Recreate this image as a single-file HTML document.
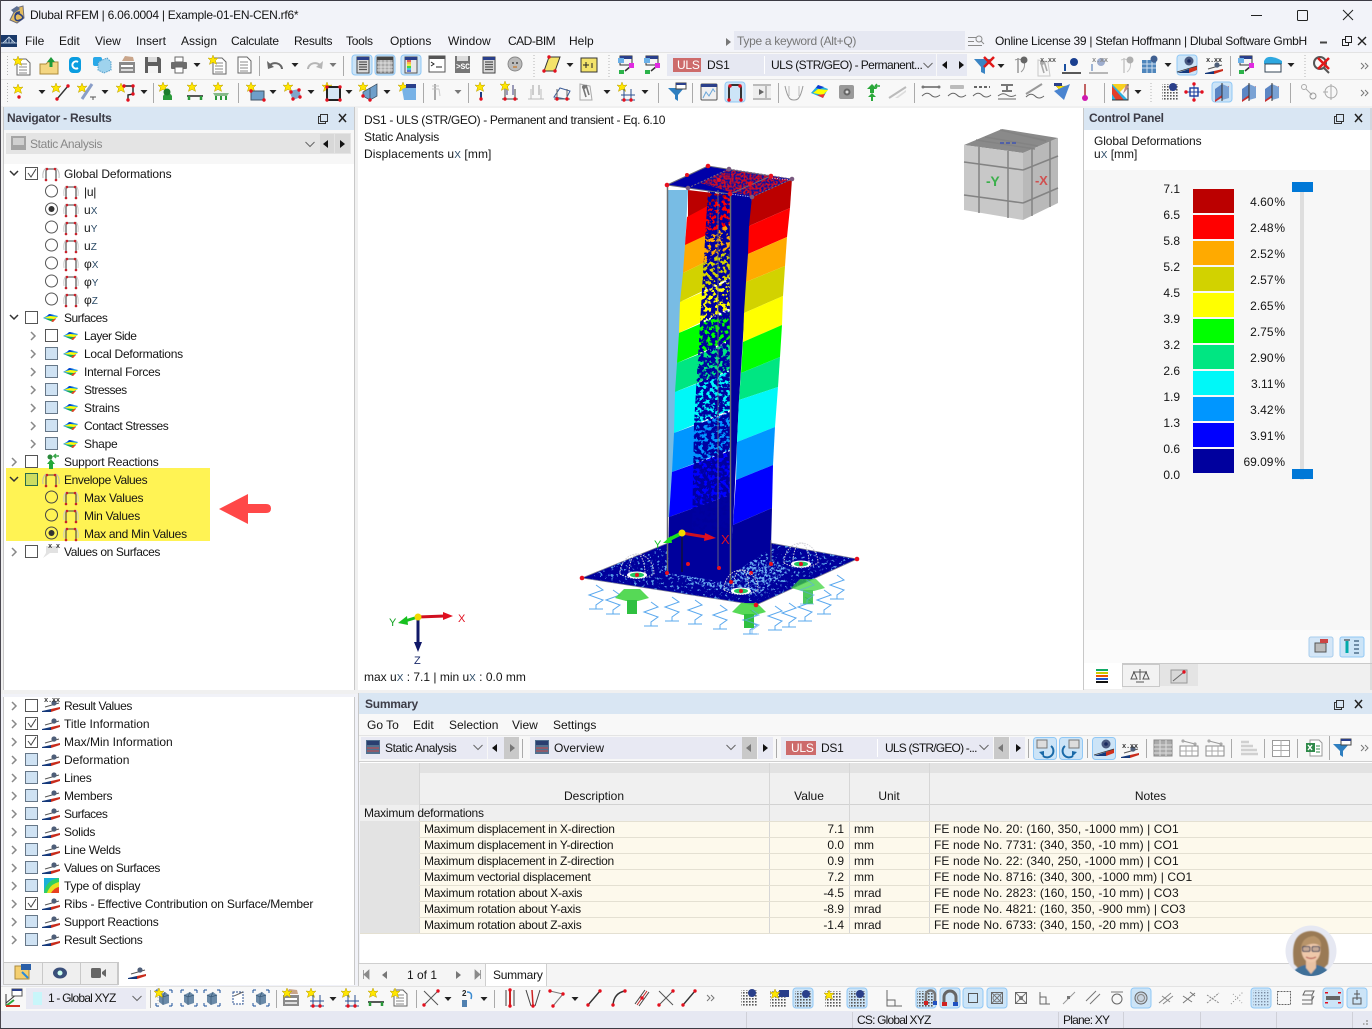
<!DOCTYPE html>
<html lang="en"><head><meta charset="utf-8"><title>Dlubal RFEM</title>
<style>
html,body{margin:0;padding:0}
body{width:1372px;height:1029px;overflow:hidden;position:relative;background:#f1f2f8;font:12px "Liberation Sans",sans-serif;color:#111}
.b{position:absolute}
.t{position:absolute;white-space:nowrap;line-height:14px;font:12px/14px "Liberation Sans",sans-serif;color:#141414;letter-spacing:-.25px}
.s{font-size:10px;color:#2b4a66}
.r{text-align:right}
.c{text-align:center}
svg{position:absolute;left:0;top:0}
.g{color:#888}
.d{font:bold 12px/14px "Liberation Sans",sans-serif;color:#3c3c46}
.n{letter-spacing:0}
.w{letter-spacing:.1px}
.p{letter-spacing:0;word-spacing:-2.5px}
.v{letter-spacing:-.8px}
</style></head><body>
<!-- backgrounds -->
<div class="b" style="left:0;top:0;width:1372px;height:30px;background:#f2f3f9"></div>
<div class="b" style="left:0;top:30px;width:1372px;height:22px;background:#f3f4f9"></div>
<div class="b" style="left:0;top:52px;width:1372px;height:54px;background:#f8f8f8;border-top:1px solid #e3e3e3;box-sizing:border-box"></div>
<div class="b" style="left:0;top:79px;width:1372px;height:1px;background:#e3e3e3"></div>
<div class="b" style="left:734px;top:31px;width:231px;height:19px;background:#e6e8f2"></div>
<div class="b" style="left:0;top:106px;width:1372px;height:588px;background:#f0f0f0"></div>
<div class="b" style="left:3px;top:107px;width:351px;height:23px;background:#d9e6f3"></div>
<div class="b" style="left:3px;top:130px;width:351px;height:34px;background:#f7f7f7"></div>
<div class="b" style="left:6px;top:133px;width:345px;height:21px;background:#e4e4e4"></div>
<div class="b" style="left:3px;top:164px;width:351px;height:526px;background:#fff"></div>
<div class="b" style="left:3px;top:697px;width:351px;height:288px;background:#fff"></div>
<div class="b" style="left:358px;top:108px;width:725px;height:582px;background:#fff"></div>
<div class="b" style="left:1084px;top:108px;width:288px;height:22px;background:#d9e6f3"></div>
<div class="b" style="left:1084px;top:130px;width:288px;height:40px;background:#fff"></div>
<div class="b" style="left:1084px;top:170px;width:288px;height:460px;background:#f7f7f7"></div>
<div class="b" style="left:1084px;top:630px;width:288px;height:33px;background:#fbfbfb"></div>
<div class="b" style="left:1084px;top:663px;width:288px;height:26px;background:#f0f0f0;border-top:1px solid #c9c9c9;box-sizing:border-box"></div>
<div class="b" style="left:1084px;top:663px;width:38px;height:26px;background:#fff"></div>
<div class="b" style="left:1160px;top:664px;width:38px;height:22px;background:#e4e4e4"></div>
<div class="b" style="left:1122px;top:664px;width:38px;height:23px;background:#f2f2f2;border:1px solid #c9c9c9;box-sizing:border-box"></div>
<!-- summary -->
<div class="b" style="left:358px;top:693px;width:1014px;height:21px;background:#d9e6f3"></div>
<div class="b" style="left:358px;top:714px;width:1014px;height:21px;background:#f8f8f8"></div>
<div class="b" style="left:358px;top:735px;width:1014px;height:27px;background:#f7f7f7;border-top:1px solid #e4e4e4;border-bottom:1px solid #cfcfcf;box-sizing:border-box"></div>
<div class="b" style="left:361px;top:737px;width:126px;height:22px;background:#e8e9f3"></div>
<div class="b" style="left:488px;top:737px;width:31px;height:22px;background:#e8e9f3"></div>
<div class="b" style="left:504px;top:737px;width:15px;height:22px;background:#c9c9c9"></div>
<div class="b" style="left:530px;top:737px;width:212px;height:22px;background:#e8e9f3"></div>
<div class="b" style="left:742px;top:737px;width:15px;height:22px;background:#c9c9c9"></div>
<div class="b" style="left:758px;top:737px;width:15px;height:22px;background:#e8e9f3"></div>
<div class="b" style="left:781px;top:737px;width:212px;height:22px;background:#e8e9f3"></div>
<div class="b" style="left:877px;top:739px;width:1px;height:18px;background:#fff"></div>
<div class="b" style="left:994px;top:737px;width:15px;height:22px;background:#c9c9c9"></div>
<div class="b" style="left:1010px;top:737px;width:15px;height:22px;background:#e8e9f3"></div>
<div class="b" style="left:786px;top:741px;width:30px;height:14px;background:#cd6b6b"></div>
<div class="b" style="left:360px;top:762px;width:1012px;height:201px;background:#fff"></div>
<div class="b" style="left:360px;top:763px;width:1012px;height:10px;background:#e2e2e2"></div>
<div class="b" style="left:360px;top:773px;width:1012px;height:32px;background:#f0f0f0;border-bottom:1px solid #d2d2d2;box-sizing:border-box"></div>
<div class="b" style="left:360px;top:763px;width:59px;height:42px;background:#e6e6e6"></div>
<div class="b" style="left:360px;top:805px;width:1012px;height:16px;background:#efefef"></div>
<div class="b" style="left:360px;top:821px;width:59px;height:112px;background:#e3e3e3"></div>
<div class="b" style="left:419px;top:821px;width:953px;height:112px;background:#fdf9ec"></div>
<div class="b" style="left:358px;top:963px;width:1014px;height:23px;background:#f5f5f5;border-top:1px solid #cfcfcf;box-sizing:border-box"></div>
<div class="b" style="left:485px;top:963px;width:62px;height:23px;background:#fff;border:1px solid #cfcfcf;border-bottom:0;box-sizing:border-box"></div>
<div class="b" style="left:0;top:986px;width:1372px;height:25px;background:#f8f8f8;border-top:1px solid #e3e3e3;box-sizing:border-box"></div>
<div class="b" style="left:26px;top:988px;width:120px;height:21px;background:#e8e9f3"></div>
<div class="b" style="left:0;top:1011px;width:1372px;height:18px;background:#e6e8f2"></div>
<div class="b" style="left:6px;top:468px;width:204px;height:73px;background:#fff354"></div>
<div class="b" style="left:3px;top:962px;width:115px;height:23px;background:#efefef;border:1px solid #c9c9c9;box-sizing:border-box"></div>
<div class="b" style="left:118px;top:960px;width:38px;height:26px;background:#fff"></div>
<!-- top combo -->
<div class="b" style="left:667px;top:54px;width:269px;height:22px;background:#e6e8f2"></div>
<div class="b" style="left:937px;top:54px;width:30px;height:22px;background:#e6e8f2"></div>
<div class="b" style="left:673px;top:58px;width:28px;height:14px;background:#cd6b6b"></div>
<div class="b" style="left:764px;top:56px;width:1px;height:18px;background:#fff"></div>

<svg width="1372" height="1029" viewBox="0 0 1372 1029" xmlns="http://www.w3.org/2000/svg" fill="none">
<defs>
<filter id="nz" x="0" y="0" width="1" height="1" color-interpolation-filters="sRGB"><feTurbulence type="fractalNoise" baseFrequency=".26" numOctaves="3" seed="7"/><feColorMatrix values="0 0 0 0 0 0 0 0 0 0 0 0 0 0 .63 14 0 0 0 -5.9"/><feComposite operator="in" in2="SourceAlpha"/></filter>
<filter id="nb" x="0" y="0" width="1" height="1" color-interpolation-filters="sRGB"><feTurbulence type="fractalNoise" baseFrequency=".35" numOctaves="3" seed="11"/><feColorMatrix values="0 0 0 0 .35 0 0 0 0 .62 0 0 0 0 .9 10 0 0 0 -6.2"/><feComposite operator="in" in2="SourceAlpha"/></filter>
<filter id="nc" x="0" y="0" width="1" height="1" color-interpolation-filters="sRGB"><feTurbulence type="fractalNoise" baseFrequency=".4" numOctaves="3" seed="5"/><feColorMatrix values="0 0 0 0 .42 0 0 0 0 .68 0 0 0 0 .95 10 0 0 0 -5.1"/><feComposite operator="in" in2="SourceAlpha"/></filter>
<filter id="nr" x="0" y="0" width="1" height="1" color-interpolation-filters="sRGB"><feTurbulence type="fractalNoise" baseFrequency=".5" numOctaves="1" seed="4"/><feColorMatrix values="0 0 0 0 .8 0 0 0 0 .05 0 0 0 0 .15 9 0 0 0 -3.9"/><feComposite operator="in" in2="SourceAlpha"/></filter>
<filter id="bl"><feGaussianBlur stdDeviation=".5"/></filter>
<clipPath id="av"><ellipse cx="1311" cy="951" rx="25" ry="25"/></clipPath>
<g id="st"><path d="M0-5 1.3-1.6 5-2 2.4.6 3.6 4.4 0 2.4-3.6 4.4-2.4.6-5-2-1.3-1.6Z" fill="#ffe600" stroke="#b89c00" stroke-width=".5"/></g>
<circle id="rd" r="1.7" fill="#e3101e"/>
<circle id="rs" r="1.3" fill="#c8202a"/>
<path id="dr" d="M-3.5-2H3.5L0 2Z" fill="#222"/>
<path id="dg" d="M-3.5-2H3.5L0 2Z" fill="#777"/>
<path id="chd" d="M-4-2 0 2 4-2" stroke="#333" stroke-width="1.5"/>
<path id="chr" d="M-2-4 2 0-2 4" stroke="#888" stroke-width="1.5"/>
<path id="chc" d="M-4.5-2 0 2.5 4.5-2" stroke="#666"/>
<path id="le" d="M2-4V4L-3 0Z" fill="#111"/>
<path id="ri" d="M-2-4V4L3 0Z" fill="#111"/>
<path id="leg" d="M2-4V4L-3 0Z" fill="#777"/>
<path id="rig" d="M-2-4V4L3 0Z" fill="#777"/>
<g id="ar"><path d="M-8 4Q-9-3-5-6M8 4Q9-3 5-6" stroke="#bbb"/><path d="M-5 6V-3Q-5-5-3-5H3Q5-5 5-3V6" stroke="#444" stroke-width="1.1"/><use href="#rs" x="-5" y="6"/><use href="#rs" x="5" y="6"/><use href="#rs" x="-4" y="-5"/><use href="#rs" x="4" y="-5"/></g>
<g id="aS"><path d="M-7 4Q-8-3-5-6M7 4Q8-3 5-6" stroke="#ccc"/><path d="M-5 6V-3Q-5-5-3-5H3Q5-5 5-3V6" stroke="#444" stroke-width="1.1"/><use href="#rs" x="-5" y="6"/><use href="#rs" x="5" y="6"/><use href="#rs" x="-4" y="-5"/><use href="#rs" x="4" y="-5"/></g>
<g id="sf"><path d="M-8 0-1-4 7-2 2 4Z" fill="#1a9ae6"/><path d="M-7 0-1-2 7-1 3 1Z" fill="#ff0"/><path d="M-5 1 4 1 2 4Z" fill="#10b050"/><path d="M-2-4 3-3 0-2-4-2Z" fill="#0044cc"/><path d="M0 3 3 1 5 1 2 4Z" fill="#f04020"/></g>
<g id="sr"><path d="M-2 1H2V7H-2Z" fill="#25a83a"/><path d="M0-3-4 2H4Z" fill="#25a83a"/><circle cx="-1" cy="-5" r="2.5" fill="#2a8a3a"/><path d="M8-6H3L5-8M3-6 5-4" stroke="#3aa84a" stroke-width="1.5"/></g>
<g id="vs"><path d="M-8 6-1 1H7V-6H-5V1" fill="#e2e2e2"/></g>
<g id="bw"><path d="M-9 5 0 3V6H-9Z" fill="#14387a"/><path d="M0 3 9 1V3L0 6Z" fill="#c82c1c"/><path d="M-6 1 8-3" stroke="#555"/><circle cx="3" cy="-3" r="2.6" fill="#4e5e78"/></g>
<g id="bwT"><path d="M-10 8 2 4V8H-10Z" fill="#14387a"/><path d="M2 4 10 1V5L2 8Z" fill="#d0301c"/><path d="M-10 7 10 1" stroke="#333" stroke-width=".7"/><circle cx="2" cy="-4" r="4.5" fill="#4a5a80"/><circle cx="2" cy="-4" r="1.8" fill="#1a2a60"/></g>
<g id="dc"><path d="M-6-8H3L7-4V8H-6Z" fill="#fff" stroke="#666"/><path d="M-4-3H4M-4 0H4M-4 3H4M-4 6H4" stroke="#888"/></g>
<g id="fo"><path d="M-9-2H-3L-1-4H9V8H-9Z" fill="#f4d682" stroke="#ab8a3a"/><path d="M2-9-2-4H.5V1H3.5V-4H6Z" fill="#1f9a3a"/></g>
<g id="cc"><rect x="-6" y="-8" width="12" height="16" rx="4" fill="#0a9de0"/><path d="M3-3A3.6 3.6 0 1 0 3 3" stroke="#fff" stroke-width="2"/></g>
<g id="cu"><rect x="-8" y="-8" width="9" height="9" rx="2" fill="#28a8e8"/><path d="M-1-4 6-7 10-3V5L3 8-3 5V-2Z" fill="#9fd3ee" stroke="#4c9ac8" stroke-dasharray="1.5 1"/></g>
<g id="pk"><rect x="-8" y="-3" width="16" height="11" fill="#8a8a8a"/><rect x="-6" y="0" width="12" height="2" fill="#fff"/><rect x="-6" y="4" width="12" height="2" fill="#ddd"/><path d="M-5-4-2-9 6-8 7-4Z" fill="#c9a58a"/></g>
<g id="sv"><path d="M-8-8H6L8-6V8H-8Z" fill="#5f5f5f"/><rect x="-5" y="-8" width="9" height="5" fill="#ddd"/><rect x="-5" y="1" width="10" height="7" fill="#f4f4f4"/></g>
<g id="pr"><rect x="-4" y="-8" width="8" height="5" fill="#fff" stroke="#666"/><rect x="-8" y="-3" width="16" height="7" rx="1" fill="#6d6d6d"/><rect x="-4" y="2" width="8" height="6" fill="#fff" stroke="#666"/></g>
<g id="un"><path d="M-7 0A7 6 0 0 1 6 3" stroke="#666" stroke-width="2"/><path d="M-9-5-8 3-2 1Z" fill="#666"/></g>
<g id="tw"><rect x="-6" y="-8" width="12" height="16" fill="#dadada" stroke="#444"/><rect x="-6" y="-8" width="12" height="3" fill="#2a3f8a"/><path d="M-4-3H4M-4-.5H4M-4 2H4M-4 4.5H4" stroke="#555" stroke-width="1.2"/></g>
<g id="tg"><rect x="-8" y="-8" width="16" height="16" fill="#aaa" stroke="#555"/><rect x="-8" y="-8" width="16" height="3" fill="#444"/><path d="M-8-2H8M-8 2H8M-8 5H8M-4-5V8M0-5V8M4-5V8" stroke="#eee" stroke-width=".7"/></g>
<g id="tc"><rect x="-6" y="-8" width="12" height="16" fill="#e8e8e8" stroke="#555"/><rect x="-6" y="-8" width="12" height="3" fill="#2a3f8a"/><path d="M-4-4H0" stroke="#d22" stroke-width="1.4"/><path d="M-4-2H0" stroke="#fa0" stroke-width="1.4"/><path d="M-4 0H0" stroke="#ee0" stroke-width="1.4"/><path d="M-4 2H0" stroke="#0c0" stroke-width="1.4"/><path d="M-4 4H0" stroke="#0bd" stroke-width="1.4"/><path d="M-4 6H0" stroke="#24c" stroke-width="1.4"/></g>
<g id="cm"><rect x="-8" y="-8" width="16" height="16" fill="#fff" stroke="#555"/><rect x="-8" y="-8" width="16" height="3" fill="#555"/><path d="M-6-2-3 0-6 2M-1 3H5" stroke="#222"/></g>
<g id="hd"><circle cy="-1" r="7" fill="#bbb" stroke="#888"/><circle cx="-2" cy="-2" r="1" fill="#444"/><circle cx="2" cy="-2" r="1" fill="#444"/><path d="M-2 2H2" stroke="#c60"/></g>
<g id="yl"><path d="M-3-8H8L3 6H-8Z" fill="#f4e36a" stroke="#333"/><use href="#rd" x="-8" y="6"/><use href="#rd" x="3" y="6"/><use href="#rd" x="-3" y="-8"/></g>
<g id="yb"><rect x="-8" y="-7" width="16" height="14" fill="#f4e36a" stroke="#333"/><path d="M-3-3V3M-6 0H0M3-2V3" stroke="#222"/></g>
<g id="cw"><rect x="-7" y="-9" width="12" height="9" fill="#f3f3f3" stroke="#333"/><rect x="-7" y="-9" width="12" height="3" fill="#2a3f8a"/><rect x="-9" y="-7" width="6" height="5" fill="#6ab0e8"/><rect x="-8" y="5" width="5" height="4" fill="#2bb34a"/><path d="M-2 6 4 1" stroke="#333" stroke-width="1.5"/><rect x="2" y="-2" width="5" height="5" fill="#e02ae0"/></g>
<g id="fl"><path d="M-9-7H8L2 1V8L-2 6V1Z" fill="#3b85c4"/></g>
<g id="tre"><path d="M-2-8V7" stroke="#666"/><path d="M-5-6Q0-8 4-5M4-5Q6 2 1 6" stroke="#999"/><circle cx="4" cy="-6" r="3.5" fill="#666"/></g>
<g id="grd"><rect x="-8" y="-6" width="14" height="13" fill="#4f86bc"/><path d="M-8-2H6M-8 2H6M-3-6V7M2-6V7" stroke="#cde"/><circle cx="4" cy="-7" r="3.5" fill="#3f5f90"/></g>
<g id="tr"><path d="M-7-2V5" stroke="#1a4fa0" stroke-width="2"/><path d="M-10 7H9" stroke="#222" stroke-width="1.4"/><circle cx="2" cy="-4" r="4" fill="#1a3f90"/></g>
<g id="l1"><use href="#st" x="-5" y="-4"/><path d="M-4 7 7-6" stroke="#333" stroke-width="1.4"/><use href="#rd" x="-4" y="7"/><use href="#rd" x="7" y="-6"/></g>
<g id="l2"><use href="#st" x="-5" y="-4"/><path d="M-5 7 5-8" stroke="#8a9ec8" stroke-width="3"/><path d="M3 5H9M6 5V8" stroke="#555"/></g>
<g id="l3"><use href="#st" x="-5" y="-4"/><path d="M-2-6H7V2L2 3V8" stroke="#222" stroke-width="1.4"/><use href="#rd" x="-2" y="-6"/><use href="#rd" x="7" y="-6"/><use href="#rd" x="7" y="2"/><use href="#rd" x="2" y="8"/></g>
<g id="p1"><use href="#st" x="-4" y="-5"/><path d="M-4 4A5 5 0 0 1 5 4V8H-4Z" fill="#2a9a3a"/><circle cy="0" r="3.5" fill="#1c7c2c"/></g>
<g id="p2"><use href="#st" x="-3" y="-5"/><path d="M-8 4H8" stroke="#222" stroke-width="1.5"/><path d="M-6 4V8M6 4V8" stroke="#2a9a3a" stroke-width="2.5"/></g>
<g id="p3"><use href="#st" x="-3" y="-5"/><path d="M-8 1H8L6 4H-6Z" fill="#86b98a"/><path d="M-5 4V8M0 4V8M5 4V8" stroke="#2a9a3a" stroke-width="2"/></g>
<g id="s1"><use href="#st" x="-5" y="-5"/><path d="M-5-1H8V8H-5Z" fill="#6f9fca" stroke="#456"/><use href="#rd" x="-5" y="-1"/><use href="#rd" x="8" y="8"/></g>
<g id="s2"><use href="#st" x="-5" y="-5"/><path d="M-4-1 6-3 8 5 0 8Z" fill="#7fa7cc"/><use href="#rd" x="-2" y="0"/><use href="#rd" x="6" y="-2"/><use href="#rd" x="0" y="7"/><use href="#rd" x="7" y="5"/></g>
<g id="s3"><use href="#st" x="-5" y="-5"/><rect x="-5" y="-5" width="13" height="13" fill="#d5e6f5" stroke="#222" stroke-width="2"/><use href="#rd" x="-5" y="-5"/><use href="#rd" x="8" y="-5"/><use href="#rd" x="-5" y="8"/><use href="#rd" x="8" y="8"/></g>
<g id="s4"><use href="#st" x="-6" y="-5"/><path d="M-6 0 1-4V8L-6 4ZM1-4 8-8V4L1 8Z" fill="#6f9fca" stroke="#345" stroke-width=".7"/><use href="#rd" x="-6" y="4"/><use href="#rd" x="1" y="8"/></g>
<g id="s5"><use href="#st" x="-5" y="-5"/><path d="M-6-3 6-7 8-5V8L-4 8Z" fill="#78b2e6"/><rect x="-2" y="-8" width="10" height="4" fill="#2a3f8a"/></g>
<g id="v1"><path d="M-1-8V8" stroke="#aaa" stroke-width="2"/><path d="M-4-6H3M-4-3H3" stroke="#c4c4c4"/><path d="M3-3 4 4" stroke="#ccc"/></g>
<g id="n1"><use href="#st" x="-1" y="-5"/><path d="M0 0V6" stroke="#1c3a80" stroke-width="2"/><use href="#rd" x="0" y="7"/></g>
<g id="n2"><path d="M-8 7H8M-5-3V7M5-3V7" stroke="#444"/><path d="M-3-7V3M3-7V3" stroke="#9a9ab8" stroke-width="2"/><use href="#rd" x="-5" y="7"/><use href="#rd" x="5" y="7"/><use href="#st" x="-5" y="-6"/></g>
<g id="n3"><path d="M-8 7H8M-5-3V7M5-3V7" stroke="#bbb"/><path d="M-3-7V3M3-7V3" stroke="#ccc" stroke-width="2"/></g>
<g id="n4"><path d="M-8 5-2-4 8-1 4 7Z" stroke="#3c5c98"/><path d="M-8 7H8M-5-3V7M5-3V7" stroke="#666"/><use href="#rd" x="-5" y="7"/><use href="#rd" x="5" y="7"/></g>
<g id="n5"><path d="M-8-8 2-6 4 8H-8Z" stroke="#aaa"/><path d="M-5-5-2 5M-2-7 1 3" stroke="#777" stroke-width="1.6"/><circle cx="-4" cy="-5" r="2" fill="#777"/></g>
<g id="n6"><use href="#st" x="-5" y="-5"/><path d="M-6 8H8M-3-3V8M4-3V8M-6 3H8" stroke="#2a4f90"/><use href="#rd" x="-3" y="8"/><use href="#rd" x="4" y="8"/></g>
<g id="fr"><rect x="-8" y="-8" width="16" height="16" rx="1" fill="#f0f0f0" stroke="#555"/><rect x="-8" y="-8" width="16" height="3" fill="#2a3f8a"/><path d="M-6 6-3 0 0 4 4-3 6 0" stroke="#6aa6d8"/></g>
<g id="arf"><rect x="-10" y="-10" width="20" height="20" rx="3" fill="#cce4f7" stroke="#90c8f6"/><path d="M-6 8V-4Q-6-7-3-7H3Q6-7 6-4V8" stroke="#333" stroke-width="2"/><use href="#rd" x="-6" y="8"/><use href="#rd" x="6" y="8"/><use href="#rd" x="-5" y="-6"/><use href="#rd" x="5" y="-6"/></g>
<g id="flm"><rect x="-9" y="-8" width="18" height="16" fill="#bbb"/><rect x="-9" y="-6" width="18" height="12" fill="#eee"/><path d="M-3-3 2 0-3 3Z" fill="#666"/><path d="M4-6V6" stroke="#888"/></g>
<g id="wv"><path d="M-9-6C-6 8-3 8 0 8S6 8 9-6" stroke="#999"/><path d="M-5-6V4M5-6V4" stroke="#bbb"/></g>
<g id="rb"><path d="M-9 1-2-7 8-3 3 6Z" fill="#20aee0"/><path d="M-7 1-2-3 8-2 3 3Z" fill="#ff0"/><path d="M-3 3 5 2 3 6Z" fill="#e33"/><path d="M-2-7 4-5 0-3-4-4Z" fill="#1238d0"/></g>
<g id="box"><rect x="-8" y="-7" width="15" height="14" rx="2" fill="#9a9a9a"/><circle cx="0" r="3.5" fill="#666"/><circle cx="0" r="1.5" fill="#ddd"/></g>
<g id="srg"><path d="M0-8-5-3H5Z" fill="#2aa83a"/><path d="M-2-3H2V1H-2Z" fill="#2aa83a"/><path d="M0 1-4 5H4Z" fill="#2aa83a"/><path d="M-1 5H1V9H-1Z" fill="#2aa83a"/><path d="M8-6H3M3-6 5-8M3-6 5-4" stroke="#2aa83a" stroke-width="1.4"/></g>
<g id="gb"><path d="M-9 6 8-5" stroke="#bbb" stroke-width="2"/><path d="M-3 6 8-2V0L0 6Z" fill="#ddd"/></g>
<g id="e1"><path d="M-8-5H8" stroke="#888" stroke-width="2"/><circle cx="-8" cy="-5" r="1.5" fill="#777"/><circle cx="8" cy="-5" r="1.5" fill="#777"/><path d="M-9 4Q-4-1 0 3T9 3" stroke="#666"/></g>
<g id="e2"><rect x="-7" y="-7" width="14" height="4" rx="1" fill="#bbb"/><path d="M-9 4Q-4-1 0 3T9 3" stroke="#666"/></g>
<g id="e3"><path d="M-8-5H8" stroke="#666" stroke-dasharray="3 2" stroke-width="2"/><path d="M-9 4Q-4-1 0 3T9 3" stroke="#666"/></g>
<g id="e4"><path d="M-6-7H6M0-7V-1M-5-1H5" stroke="#777" stroke-width="2"/><path d="M-9 4Q-4 0 0 3T9 3M-9 7H9" stroke="#666"/></g>
<g id="e5"><path d="M-9 2 7-8" stroke="#999" stroke-width="2"/><path d="M-9 5Q-4 0 0 4T9 4" stroke="#666"/></g>
<g id="e6"><use href="#st" x="-1" y="-4"/><path d="M-8-1 8-8 2 8Z" fill="#4a84d0"/><rect x="-8" y="-9" width="8" height="3" fill="#2a3f8a"/></g>
<g id="pn"><path d="M0-8V5" stroke="#b03030" stroke-width="1.5"/><circle cy="6" r="3" fill="#d018b0"/></g>
<g id="tm"><path d="M-8-8H8L-8 8Z" fill="#f8d020"/><path d="M-8 8-8-8 8 8Z" fill="#2ab0e0"/><path d="M-8-6 4 8H-4L-8 2Z" fill="#e43c28"/><path d="M-8 8H8V-8" stroke="#333"/><path d="M6-8 9-5 3 2Z" fill="#b88"/></g>
<g id="dg1"><rect x="-8" y="-8" width="16" height="16" fill="url(#dp)"/><circle cx="3" cy="-5" r="4" fill="#2a3f8a"/></g>
<pattern id="dp" width="3" height="3" patternUnits="userSpaceOnUse"><rect width="1.6" height="1.6" fill="#555"/></pattern>
<pattern id="dl" width="3" height="3" patternUnits="userSpaceOnUse"><rect width="1.4" height="1.4" fill="#7a8aa0"/></pattern>
<g id="dg0"><rect x="-8" y="-8" width="16" height="16" fill="url(#dp)"/></g>
<g id="dh"><rect x="-8" y="-8" width="16" height="16" fill="url(#dl)"/></g>
<g id="cr"><path d="M-8 0H8M0-8V8" stroke="#1a3fa0"/><rect x="-4" y="-4" width="8" height="8" stroke="#1a3fa0" stroke-width="1.4"/><use href="#rd" x="-8" y="0"/><use href="#rd" x="8" y="0"/><use href="#rd" x="0" y="-8"/><use href="#rd" x="0" y="8"/></g>
<g id="pl"><path d="M-7 5 7-6 7 1-7 10Z" fill="#c83030"/><path d="M-7-3 0-8V3L-7 8Z" fill="#5c86c4"/><path d="M0-8 7-5V6L0 8Z" fill="#7aa2d4"/><path d="M0-9V9" stroke="#333"/></g>
<g id="ln"><circle cx="-5" cy="-5" r="2.5" stroke="#aaa"/><path d="M-3-3 3 3" stroke="#aaa"/><circle cx="4" cy="4" r="3" stroke="#999"/></g>
<g id="rt"><circle r="6" stroke="#aaa"/><path d="M-8 0H-3M0-8V8" stroke="#aaa"/></g>
<g id="mv"><rect x="-8" y="-8" width="10" height="8" fill="#ddd" stroke="#777"/><path d="M6-2A6 6 0 0 1-2 8" stroke="#1a6aa8" stroke-width="2"/><path d="M-6 4-1 9V3Z" fill="#1a6aa8"/></g>
<g id="tb"><rect x="-9" y="-8" width="18" height="16" fill="#aaa" stroke="#888"/><path d="M-9-3H9M-9 1H9M-9 5H9M-3-8V8M3-8V8" stroke="#ddd"/></g>
<g id="tl"><rect x="-9" y="-2" width="18" height="10" fill="#fff" stroke="#888"/><path d="M-9 3H9M-3-2V8M3-2V8" stroke="#aaa"/><path d="M-6-7 6-4" stroke="#999"/><circle cx="-6" cy="-7" r="1.6" fill="#aaa"/><circle cx="6" cy="-4" r="1.6" fill="#aaa"/></g>
<g id="xg"><path d="M-4-8H5L8-5V8H-4Z" fill="#fff" stroke="#999"/><rect x="-8" y="-5" width="9" height="9" fill="#2f8a4a"/><path d="M-6-3-2 2M-2-3-6 2" stroke="#fff" stroke-width="1.4"/><path d="M2-2H6M2 1H6M2 4H6" stroke="#2f8a4a"/></g>
<g id="flw"><path d="M-9-4H7L1 3V9L-2 7V3Z" fill="#2f7fc0"/><rect x="-1" y="-9" width="10" height="6" fill="#fff" stroke="#444"/><rect x="-1" y="-9" width="10" height="2" fill="#2a3f8a"/></g>
<g id="ax"><path d="M-8 8V-4M-8 5 8-8" stroke="#333"/><path d="M-8 8 0 2" stroke="#2aa83a" stroke-width="2"/><path d="M-8 8H6" stroke="#d03020" stroke-width="2"/><rect x="-2" y="-9" width="10" height="7" fill="#fff" stroke="#555"/><rect x="-2" y="-9" width="10" height="2" fill="#2a3f8a"/></g>
<g id="sq"><rect x="-5" y="-6" width="10" height="12" fill="#fff" stroke="#2a4f90" stroke-dasharray="2 1"/><path d="M-4-2 5-6" stroke="#666"/></g>
<g id="cb"><rect x="-8" y="-8" width="16" height="16" stroke="#1a4f9a" stroke-dasharray="3 10 3 0"/><path d="M-5-3 1-6 5-3V5L-1 7-5 4Z" fill="#6a8aa8"/><path d="M1-6-1-1V7M-5-3-1-1 5-3" stroke="#3a5a78" stroke-width=".7"/></g>
<g id="cbs"><use href="#cb"/><use href="#st" x="-5" y="-5"/></g>
<g id="ml"><path d="M-4 8V-8M4 8V-8" stroke="#444"/><path d="M0-8V8" stroke="#c22" stroke-width="2"/><use href="#rd" x="0" y="-8"/><use href="#rd" x="0" y="8"/></g>
<g id="m2"><path d="M-7-8-2 8M7-8 2 8" stroke="#444"/><path d="M-1-8 0 7" stroke="#c22" stroke-width="1.5"/><use href="#rd" x="0" y="8"/></g>
<g id="m3"><path d="M-6-7 7-4-3 8" stroke="#777"/><use href="#rd" x="-6" y="-7"/><use href="#rd" x="7" y="-4"/><use href="#rd" x="-3" y="8"/></g>
<g id="m4"><path d="M-6 7 6-7" stroke="#333" stroke-width="1.4"/><use href="#rd" x="-6" y="7"/><use href="#rd" x="6" y="-7"/></g>
<g id="m5"><path d="M-6 7Q-5-5 6-7" stroke="#333" stroke-width="1.4"/><use href="#rd" x="-6" y="7"/><use href="#rd" x="6" y="-7"/></g>
<g id="m6"><path d="M-7 6 3-8M-3 8 7-6" stroke="#444"/><path d="M-5 7 5-7" stroke="#c22"/><use href="#rd" x="0" y="0"/></g>
<g id="m7"><path d="M-7 7 7-7M-7-7 7 7" stroke="#555"/><use href="#rd" x="7" y="-7"/><use href="#rd" x="-7" y="7"/></g>
<g id="hsq"><rect x="-10" y="-10" width="20" height="20" rx="3" fill="#cce4f7" stroke="#90c8f6"/></g>
<g id="spr"><path d="M7 0 14 5 0 10 14 15 7 20V24M0 24H14" stroke="#5aa8ee" stroke-width="1"/></g>
<g id="gar"><path d="M-17 0-8-9H8L17 0 6 3H-6Z" fill="#3fd43f" opacity=".88"/><rect x="-5" y="2" width="10" height="14" fill="#2fc040"/></g>
<g id="dome"><path d="M-17 0A17 20 0 0 1 17 0M-8 0A8 20 0 0 1 8 0M-17 0Q0 9 17 0" stroke="#d2d2d8" stroke-dasharray="1.5 1.2"/><ellipse cx="0" cy="1" rx="10" ry="3.500" fill="#fff"/><ellipse cx="0" cy="1" rx="7" ry="2.400" fill="#22c860"/><circle cy="1" r="2" fill="#e3101e"/></g>
</defs>

<!-- window edges -->
<path d="M0 .5H1372" stroke="#3c3a44"/>
<path d="M.5 0V1029" stroke="#4a4850"/>
<path d="M0 1028.5H1372" stroke="#3c3a44"/>
<path d="M3.5 107V690M3.5 697V985" stroke="#c8c8c8"/>
<path d="M354.5 107V690M354.5 697V985" stroke="#c8c8c8"/>
<path d="M1083.5 108V690M1371 108V690" stroke="#c8c8c8"/>
<path d="M358.5 693V986" stroke="#c8c8c8"/>

<!-- title bar icon -->
<path d="M10 20 16 8 23 6 24 18 17 23Z" fill="#e4bc5e" stroke="#6e6e7c"/>
<path d="M11 10 17 6 20 9 14 13Z" fill="#5d6e90"/>
<path d="M20 12Q15 12 15 17T20 20 21 15 16 15" stroke="#2a3f80" stroke-width="1.500"/>
<path d="M1251 15.500H1262" stroke="#222"/>
<rect x="1297.500" y="10.500" width="10" height="10" rx="1" stroke="#222"/>
<path d="M1343 10 1353 20M1353 10 1343 20" stroke="#222"/>
<!-- menu bar icon -->
<rect x="1" y="35" width="16" height="12" fill="#1a3a6a"/><path d="M1 43H17M3 43 9 37 15 43M9 37V43M6 43V40M12 43V40" stroke="#cfe0f0" stroke-width=".8"/>
<path d="M726 38V46L731 42Z" fill="#777"/>
<path d="M968 37.500H976M968 41.500H974M968 45.500H982" stroke="#8a8a8a"/><circle cx="979" cy="39" r="3" stroke="#8a8a8a"/><path d="M981 41 984 44" stroke="#8a8a8a"/>
<path d="M1320 42.500H1327" stroke="#444" stroke-width="2"/>
<rect x="1342.500" y="39.500" width="6" height="6" stroke="#222"/><rect x="1345.500" y="36.500" width="6" height="6" fill="#f3f4f9" stroke="#222"/>
<path d="M1358 37 1366 45M1366 37 1358 45" stroke="#222" stroke-width="1.4"/>

<!-- toolbar grips & separators -->
<path d="M7.500 56V76M7.500 83V103M534 55V77M609 55V77M1305 55V77M1151 83V103M158 988V1008" stroke="#b5b5b5" stroke-dasharray="1 2"/>
<path d="M259.500 56V76M343.500 56V76M1230.500 56V76M153.500 83V103M238.500 83V103M423.500 83V103M468.500 83V103M658.500 83V103M692.500 83V103M778.500 83V103M914.500 83V103M1104.500 83V103M1290.500 83V103M150.500 990V1008M276.500 990V1008M416.500 990V1008M494.500 990V1008M522.500 739V758M776.500 739V758M1028.500 739V758M1087.500 739V758M1146.500 739V758M1231.500 739V758M1264.500 739V758M1297.500 739V758M1329.500 736V760" stroke="#aaa"/>

<!-- toolbar 1 -->
<use href="#dc" x="23" y="67"/><use href="#st" x="18" y="61"/>
<use href="#fo" x="49" y="66"/><use href="#cc" x="75" y="65"/><use href="#cu" x="101" y="65"/>
<use href="#pk" x="127" y="65"/><use href="#sv" x="153" y="65"/><use href="#pr" x="179" y="65"/><use href="#dr" x="197" y="65"/>
<use href="#dc" x="219" y="66"/><use href="#st" x="213" y="60"/><use href="#dc" x="244" y="65"/>
<use href="#un" x="276" y="66"/><use href="#dr" x="295" y="65"/><use href="#un" transform="translate(314 66) scale(-1 1)" opacity=".45"/><use href="#dg" x="333" y="65"/>
<use href="#hsq" x="362" y="65"/><use href="#hsq" x="385" y="65"/><use href="#hsq" x="411" y="65"/>
<use href="#tw" x="363" y="65"/><use href="#tg" x="385" y="65"/><use href="#tc" x="411" y="65"/>
<use href="#cm" x="437" y="64"/>
<rect x="455" y="56" width="15" height="17" fill="#777"/><rect x="457" y="56" width="11" height="5" fill="#ddd"/>
<use href="#tw" x="489" y="65"/><use href="#hd" x="515" y="65"/>
<use href="#yl" x="552" y="65"/><use href="#dr" x="570" y="65"/><use href="#yb" x="589" y="65"/>
<use href="#cw" x="627" y="65"/><use href="#cw" x="653" y="65"/>
<use href="#le" x="945" y="65"/><use href="#ri" x="961" y="65"/><use href="#chc" x="928" y="65"/>
<use href="#fl" x="983" y="66"/><path d="M984 57 994 67M994 57 984 67" stroke="#e01818" stroke-width="2.500"/><use href="#dr" x="1001" y="66"/>
<use href="#tre" x="1020" y="66"/><use href="#n5" x="1046" y="68" opacity=".6"/><use href="#tr" x="1072" y="66"/><use href="#tr" x="1099" y="66" opacity=".4"/><use href="#tre" x="1126" y="66" opacity=".5"/>
<use href="#grd" x="1150" y="66"/><use href="#dr" x="1168" y="65"/>
<use href="#hsq" x="1187" y="65"/><use href="#bwT" x="1187" y="65"/><use href="#bw" x="1214" y="68"/>
<use href="#cw" x="1247" y="65"/>
<path d="M1264 61Q1266 56 1272 57T1282 61V64H1264Z" fill="#2ea8e0"/><rect x="1265" y="64" width="16" height="8" fill="#fff" stroke="#345"/><use href="#dr" x="1291" y="65"/>
<circle cx="1320" cy="63" r="6" stroke="#555" stroke-width="2"/><path d="M1324 68 1329 73" stroke="#555" stroke-width="2"/><path d="M1318 58 1329 69M1329 58 1318 69" stroke="#e01818" stroke-width="2.500"/>
<path d="M1361 63 1364 66 1361 69M1365 63 1368 66 1365 69" stroke="#777"/>

<!-- toolbar 2 -->
<use href="#st" x="18" y="89"/><use href="#rd" x="19" y="97"/><use href="#dr" x="42" y="92"/>
<use href="#l1" x="61" y="92"/><use href="#l2" x="87" y="92"/><use href="#dr" x="105" y="92"/><use href="#l3" x="126" y="92"/><use href="#dr" x="144" y="92"/>
<use href="#p1" x="167" y="92"/><use href="#p2" x="195" y="92"/><use href="#p3" x="221" y="92"/>
<use href="#s1" x="256" y="92"/><use href="#dr" x="273" y="92"/><use href="#s2" x="293" y="92"/><use href="#dr" x="311" y="92"/><use href="#s3" x="332" y="92"/><use href="#dr" x="349" y="92"/><use href="#s4" x="369" y="92"/><use href="#dr" x="387" y="92"/><use href="#s5" x="408" y="92"/>
<use href="#v1" x="436" y="92"/><use href="#dg" x="458" y="92"/>
<use href="#n1" x="481" y="92"/><use href="#n2" x="510" y="92"/><use href="#n3" x="536" y="92"/><use href="#n4" x="562" y="92"/><use href="#n5" x="588" y="92"/><use href="#dr" x="607" y="92"/><use href="#n6" x="627" y="92"/><use href="#dr" x="645" y="92"/>
<use href="#flw" x="677" y="92"/>
<use href="#fr" x="709" y="92"/><use href="#arf" x="735" y="92"/><use href="#flm" x="762" y="92"/>
<use href="#wv" x="794" y="92"/><use href="#rb" x="820" y="92"/><use href="#box" x="847" y="92"/><use href="#srg" x="872" y="92"/><use href="#gb" x="898" y="92"/>
<use href="#e1" x="931" y="92"/><use href="#e2" x="957" y="92"/><use href="#e3" x="982" y="92"/><use href="#e4" x="1007" y="92"/><use href="#e5" x="1035" y="92"/><use href="#e6" x="1062" y="92"/><use href="#pn" x="1085" y="92"/>
<use href="#tm" x="1120" y="92"/><use href="#dr" x="1138" y="92"/>
<use href="#dg1" x="1170" y="92"/><use href="#cr" x="1194" y="92"/><use href="#hsq" x="1222" y="92"/><use href="#pl" x="1222" y="92"/><use href="#pl" x="1249" y="92"/><use href="#pl" x="1272" y="92"/>
<use href="#ln" x="1309" y="92"/><use href="#rt" x="1331" y="92"/>
<path d="M1361 90 1364 93 1361 96M1365 90 1368 93 1365 96" stroke="#777"/>

<!-- panel header icons -->
<rect x="318.500" y="116.500" width="7" height="7" stroke="#333"/><rect x="320.500" y="114.500" width="7" height="7" fill="#d9e6f3" stroke="#333"/>
<path d="M339 114 346 122M346 114 339 122" stroke="#222" stroke-width="1.500"/>
<rect x="1334.500" y="116.500" width="7" height="7" stroke="#333"/><rect x="1336.500" y="114.500" width="7" height="7" fill="#d9e6f3" stroke="#333"/>
<path d="M1355 114 1362 122M1362 114 1355 122" stroke="#222" stroke-width="1.500"/>
<rect x="1334.500" y="702.500" width="7" height="7" stroke="#333"/><rect x="1336.500" y="700.500" width="7" height="7" fill="#d9e6f3" stroke="#333"/>
<path d="M1355 700 1362 708M1362 700 1355 708" stroke="#222" stroke-width="1.500"/>
<!-- nav combo -->
<rect x="11" y="136" width="15" height="14" fill="#a4a4a4"/><rect x="13" y="138" width="11" height="7" fill="#d0d0d0"/>
<use href="#chc" x="310" y="144"/><rect x="320" y="134" width="14" height="19" fill="#d8d8d8"/><rect x="335" y="134" width="15" height="19" fill="#d8d8d8"/><use href="#le" x="326" y="144"/><use href="#ri" x="342" y="144"/>

<!-- navigator tree -->
<g stroke-width="1">
<use href="#chd" x="14" y="173"/><rect x="25.500" y="167.500" width="12" height="12" fill="#fff" stroke="#555"/><path d="M28 173 31 177 36 169" stroke="#444"/><use href="#ar" x="51" y="174"/>
<circle cx="51.500" cy="191" r="6" fill="#fff" stroke="#555"/><use href="#aS" x="71" y="192"/>
<circle cx="51.500" cy="209" r="6" fill="#fff" stroke="#555"/><circle cx="51.500" cy="209" r="3" fill="#333"/><use href="#aS" x="71" y="210"/>
<circle cx="51.500" cy="227" r="6" fill="#fff" stroke="#555"/><use href="#aS" x="71" y="228"/>
<circle cx="51.500" cy="245" r="6" fill="#fff" stroke="#555"/><use href="#aS" x="71" y="246"/>
<circle cx="51.500" cy="263" r="6" fill="#fff" stroke="#555"/><use href="#aS" x="71" y="264"/>
<circle cx="51.500" cy="281" r="6" fill="#fff" stroke="#555"/><use href="#aS" x="71" y="282"/>
<circle cx="51.500" cy="299" r="6" fill="#fff" stroke="#555"/><use href="#aS" x="71" y="300"/>
<use href="#chd" x="14" y="317"/><rect x="25.500" y="311.500" width="12" height="12" fill="#fff" stroke="#555"/><use href="#sf" x="51" y="318"/>
<use href="#chr" x="33" y="336"/><rect x="45.500" y="329.500" width="12" height="12" fill="#fff" stroke="#555"/><use href="#sf" x="71" y="336"/>
<use href="#chr" x="33" y="354"/><rect x="45.500" y="347.500" width="12" height="12" fill="#cfe2f3" stroke="#667788"/><use href="#sf" x="71" y="354"/>
<use href="#chr" x="33" y="372"/><rect x="45.500" y="365.500" width="12" height="12" fill="#cfe2f3" stroke="#667788"/><use href="#sf" x="71" y="372"/>
<use href="#chr" x="33" y="390"/><rect x="45.500" y="383.500" width="12" height="12" fill="#cfe2f3" stroke="#667788"/><use href="#sf" x="71" y="390"/>
<use href="#chr" x="33" y="408"/><rect x="45.500" y="401.500" width="12" height="12" fill="#cfe2f3" stroke="#667788"/><use href="#sf" x="71" y="408"/>
<use href="#chr" x="33" y="426"/><rect x="45.500" y="419.500" width="12" height="12" fill="#cfe2f3" stroke="#667788"/><use href="#sf" x="71" y="426"/>
<use href="#chr" x="33" y="444"/><rect x="45.500" y="437.500" width="12" height="12" fill="#cfe2f3" stroke="#667788"/><use href="#sf" x="71" y="444"/>
<use href="#chr" x="14" y="462"/><rect x="25.500" y="455.500" width="12" height="12" fill="#fff" stroke="#555"/><use href="#sr" x="51" y="462"/>
<use href="#chd" x="14" y="479"/><rect x="25.500" y="473.500" width="12" height="12" fill="#cddc60" stroke="#2a6a4a"/><use href="#ar" x="51" y="480"/>
<circle cx="51.500" cy="497" r="6" fill="#fff354" stroke="#444"/><use href="#aS" x="71" y="498"/>
<circle cx="51.500" cy="515" r="6" fill="#fff354" stroke="#444"/><use href="#aS" x="71" y="516"/>
<circle cx="51.500" cy="533" r="6" fill="#fff354" stroke="#444"/><circle cx="51.500" cy="533" r="3" fill="#333"/><use href="#aS" x="71" y="534"/>
<use href="#chr" x="14" y="552"/><rect x="25.500" y="545.500" width="12" height="12" fill="#fff" stroke="#555"/><use href="#vs" x="51" y="552"/>
</g>
<path d="M219 509 248 494V504H266Q271 504 271 508.500T266 513H248V524Z" fill="#ff4848"/>

<!-- lower tree -->
<use href="#chr" x="14" y="706"/><rect x="25.500" y="699.500" width="12" height="12" fill="#fff" stroke="#555"/><use href="#bw" x="51" y="706"/>
<use href="#chr" x="14" y="724"/><rect x="25.500" y="717.500" width="12" height="12" fill="#fff" stroke="#555"/><path d="M28 723 31 727 36 719" stroke="#444"/><use href="#bw" x="51" y="724"/>
<use href="#chr" x="14" y="742"/><rect x="25.500" y="735.500" width="12" height="12" fill="#fff" stroke="#555"/><path d="M28 741 31 745 36 737" stroke="#444"/><use href="#bw" x="51" y="742"/>
<use href="#chr" x="14" y="760"/><rect x="25.500" y="753.500" width="12" height="12" fill="#cfe2f3" stroke="#667788"/><use href="#bw" x="51" y="760"/>
<use href="#chr" x="14" y="778"/><rect x="25.500" y="771.500" width="12" height="12" fill="#cfe2f3" stroke="#667788"/><use href="#bw" x="51" y="778"/>
<use href="#chr" x="14" y="796"/><rect x="25.500" y="789.500" width="12" height="12" fill="#cfe2f3" stroke="#667788"/><use href="#bw" x="51" y="796"/>
<use href="#chr" x="14" y="814"/><rect x="25.500" y="807.500" width="12" height="12" fill="#cfe2f3" stroke="#667788"/><use href="#bw" x="51" y="814"/>
<use href="#chr" x="14" y="832"/><rect x="25.500" y="825.500" width="12" height="12" fill="#cfe2f3" stroke="#667788"/><use href="#bw" x="51" y="832"/>
<use href="#chr" x="14" y="850"/><rect x="25.500" y="843.500" width="12" height="12" fill="#cfe2f3" stroke="#667788"/><use href="#bw" x="51" y="850"/>
<use href="#chr" x="14" y="868"/><rect x="25.500" y="861.500" width="12" height="12" fill="#cfe2f3" stroke="#667788"/><use href="#bw" x="51" y="868"/>
<use href="#chr" x="14" y="886"/><rect x="25.500" y="879.500" width="12" height="12" fill="#cfe2f3" stroke="#667788"/><rect x="44" y="878" width="15" height="15" fill="#1ab0d8"/><path d="M44 893Q46 880 59 878V893Z" fill="#30d060"/><path d="M47 893Q50 884 59 882V893Z" fill="#e8e020"/><path d="M51 893Q54 888 59 887V893Z" fill="#e84020"/>
<use href="#chr" x="14" y="904"/><rect x="25.500" y="897.500" width="12" height="12" fill="#fff" stroke="#555"/><path d="M28 903 31 907 36 899" stroke="#444"/><use href="#bw" x="51" y="904"/>
<use href="#chr" x="14" y="922"/><rect x="25.500" y="915.500" width="12" height="12" fill="#cfe2f3" stroke="#667788"/><use href="#bw" x="51" y="922"/>
<use href="#chr" x="14" y="940"/><rect x="25.500" y="933.500" width="12" height="12" fill="#cfe2f3" stroke="#667788"/><use href="#bw" x="51" y="940"/>

<!-- nav tabs -->
<path d="M42.500 962V985M80.500 962V985M118.500 962V985" stroke="#c9c9c9"/>
<path d="M15 966H29V979H15Z" fill="#f4cf70" stroke="#ab8a3a"/><rect x="21" y="964" width="10" height="6" fill="#2a5fa8"/><path d="M22 972 28 978" stroke="#2a8ad8" stroke-width="2"/>
<ellipse cx="60" cy="973" rx="7" ry="5.500" fill="#3a4f7a"/><circle cx="60" cy="973" r="2.500" fill="#cfe"/>
<rect x="91" y="968" width="10" height="10" rx="1.500" fill="#666"/><path d="M102 972 106 969V977L102 974Z" fill="#666"/>
<use href="#bw" x="137" y="973"/>

<!-- 3D MODEL -->
<!-- base plate -->
<path d="M582 578 700 530 857 559 756 605Z" fill="#00009c" stroke="#7a7a90" stroke-width=".8"/>
<path d="M582 578 700 530 857 559 756 605Z" fill="#000" filter="url(#nb)"/>
<path d="M655 568 690 560 770 560 790 570 756 596 700 585Z" fill="#000" filter="url(#nc)"/>
<!-- springs -->
<use href="#spr" x="589" y="585"/><use href="#spr" x="606" y="590"/><use href="#spr" x="644" y="602"/><use href="#spr" x="665" y="597"/><use href="#spr" x="688" y="600"/><use href="#spr" x="713" y="605"/><use href="#spr" x="743" y="610"/><use href="#spr" x="768" y="606"/><use href="#spr" x="782" y="603"/><use href="#spr" x="798" y="597"/><use href="#spr" x="817" y="590"/><use href="#spr" x="830" y="575"/>
<use href="#gar" x="632" y="598"/><use href="#gar" x="749" y="612"/><use href="#gar" x="808" y="588" opacity=".85"/>
<use href="#spr" x="745" y="610" opacity=".7"/><use href="#spr" x="800" y="580" opacity=".6"/>
<!-- column: left light-blue -->
<path d="M667 190H688L671 517H668Z" fill="#78bce4"/>
<!-- left bands -->
<path d="M688 190 730 195V230H688Z" fill="#bb0000"/>
<path d="M687 217 730 194V240L685 245Z" fill="#ff0000"/>
<path d="M685 245 730 224V250L683 273Z" fill="#ffaa00"/>
<path d="M683 273 730 250V278L680 302Z" fill="#d2d200"/>
<path d="M680 302 730 280V308L679 333Z" fill="#ffff00"/>
<path d="M679 333 730 311V340L677 363Z" fill="#00ff00"/>
<path d="M677 363 730 342V370L675 392Z" fill="#00e682"/>
<path d="M675 392 730 371V410L674 433Z" fill="#00f8f8"/>
<path d="M674 433 730 412V450L672 472Z" fill="#0096ff"/>
<path d="M672 472 730 451V495L669 517Z" fill="#0000ff"/>
<path d="M669 517 730 495V583L668 573Z" fill="#00009c"/>
<!-- noise -->
<path d="M708 190 730 194V528L692 535 694 424Z" fill="#000" filter="url(#nz)"/>
<!-- dark blue strip -->
<path d="M730 194 752 197 739 400 737 442 733 525 730 583Z" fill="#00009e"/>
<!-- right bands -->
<path d="M752 197 792 179 790 208 749 226Z" fill="#bb0000"/>
<path d="M749 226 790 208 787 237 748 254Z" fill="#ff0000"/>
<path d="M748 254 787 237 785 266 746 282Z" fill="#ffaa00"/>
<path d="M746 282 785 266 783 296 744 313Z" fill="#d2d200"/>
<path d="M744 313 783 296 782 325 743 342Z" fill="#ffff00"/>
<path d="M743 342 782 325 780 357 741 373Z" fill="#00ff00"/>
<path d="M741 373 780 357 778 387 739 400Z" fill="#00e682"/>
<path d="M739 400 778 387 775 427 737 442Z" fill="#00f8f8"/>
<path d="M737 442 775 427 773 465 736 480Z" fill="#0096ff"/>
<path d="M736 480 773 465 772 508 733 525Z" fill="#0000ff"/>
<path d="M733 525 772 508 771 547 732 575 730 583Z" fill="#00009c"/>
<!-- top face -->
<path d="M667 185 708 166 771 176 792 179 752 197 730 194Z" fill="#0000a8"/>
<path d="M700 183 729 169 792 179 752 197 730 192Z" fill="#1010a0"/>
<path d="M700 183 729 169 790 179 752 196 730 192Z" fill="#000" filter="url(#nr)"/>
<path d="M667 185 708 166 771 176 730 194Z" stroke="#6a6a7a" stroke-width="1"/>
<path d="M688 188 729 169 792 179 752 197" stroke="#7a6a80" stroke-dasharray="2 1.500"/>
<path d="M730 194 752 197M772 178 790 180" stroke="#fff" stroke-dasharray="1 1.500" opacity=".8"/>
<!-- column edges -->
<path d="M667.500 185V573M730.500 194V583" stroke="#6e6e6e" stroke-width="1.500"/>
<path d="M718 568V190M771 564V540" stroke="#777" stroke-width=".8"/>
<g fill="#e8101e"><circle cx="667" cy="185" r="2.300"/><circle cx="708" cy="166" r="2.300"/><circle cx="771" cy="176" r="2.300"/><circle cx="730" cy="194" r="2.300"/><circle cx="687" cy="175" r="2"/><circle cx="719" cy="180" r="2"/><circle cx="750" cy="184" r="2"/></g>
<g fill="#7a5a80"><circle cx="688" cy="188" r="2.300"/><circle cx="729" cy="169" r="2.300"/><circle cx="792" cy="179" r="2.300"/><circle cx="752" cy="197" r="2.300"/></g>
<g fill="#e8101e"><circle cx="582" cy="578" r="2.300"/><circle cx="857" cy="559" r="2.300"/><circle cx="756" cy="605" r="2.300"/><circle cx="667" cy="573" r="2"/><circle cx="688" cy="564" r="2"/><circle cx="719" cy="568" r="2"/><circle cx="731" cy="582" r="2"/><circle cx="751" cy="573" r="2"/><circle cx="771" cy="564" r="2"/></g>
<!-- domes -->
<use href="#dome" x="637" y="574"/><use href="#dome" x="741" y="590"/><use href="#dome" x="801" y="563"/>
<!-- axes on model -->
<path d="M682 533V572" stroke="#101038" stroke-width="1.500"/>
<path d="M682 533 706 537" stroke="#d01020" stroke-width="3"/><path d="M705 533 716 538 704 541Z" fill="#e01020"/>
<path d="M682 533 668 540" stroke="#18e020" stroke-width="3.500"/><path d="M671 536 663 543 672 543Z" fill="#18e020"/>
<circle cx="682" cy="533" r="3.500" fill="#f2d800"/>
<!-- gizmo -->
<path d="M418 617 445 616" stroke="#d01020" stroke-width="3"/><path d="M443 612 453 616 443 620Z" fill="#e01020"/>
<path d="M418 617 405 621" stroke="#18c020" stroke-width="3"/><path d="M407 616 398 623 408 625Z" fill="#18c020"/>
<path d="M418 617V643" stroke="#101868" stroke-width="3"/><path d="M414 642H422L418 652Z" fill="#101868"/>
<circle cx="418" cy="617" r="3.500" fill="#f2d800"/>

<!-- cube -->
<path d="M964 145 1002 129 1058 138 1023 153Z" fill="#8a8a8a"/>
<path d="M964 145 1023 153V220L964 210Z" fill="#c8c8c8"/>
<path d="M1023 153 1058 138V203L1023 220Z" fill="#b9b9b9"/>
<path d="M979 147V213M1008 151V218M964 162 1023 170M964 195 1023 203M1032 149V216M1050 141V207M1023 170 1058 156M1023 203 1058 188M976 140 1035 149M1000 130 1046 141M985 137 1038 146M1008 132 1044 140" stroke="#838383" stroke-width="1.500"/>
<path d="M1000 143H1016" stroke="#5060a8" stroke-width="2" stroke-dasharray="4 2"/>

<!-- legend -->
<g>
<rect x="1193" y="189" width="41" height="24" fill="#bb0000"/><rect x="1193" y="215" width="41" height="24" fill="#ff0000"/><rect x="1193" y="241" width="41" height="24" fill="#ffaa00"/><rect x="1193" y="267" width="41" height="24" fill="#d2d200"/><rect x="1193" y="293" width="41" height="24" fill="#ffff00"/><rect x="1193" y="319" width="41" height="24" fill="#00ff00"/><rect x="1193" y="345" width="41" height="24" fill="#00e682"/><rect x="1193" y="371" width="41" height="24" fill="#00f8f8"/><rect x="1193" y="397" width="41" height="24" fill="#0096ff"/><rect x="1193" y="423" width="41" height="24" fill="#0000ff"/><rect x="1193" y="449" width="41" height="24" fill="#00009e"/>
</g>
<rect x="1300" y="191" width="4" height="289" fill="#dedede"/>
<rect x="1292" y="182" width="21" height="10" fill="#0078d7"/><rect x="1292" y="469" width="21" height="10" fill="#0078d7"/>
<!-- control-panel icons -->
<rect x="1309" y="637" width="24" height="20" rx="2" fill="#d4e6f7" stroke="#a9cdec"/><rect x="1315" y="643" width="11" height="9" fill="#bbb" stroke="#555"/><rect x="1320" y="639" width="8" height="4" fill="#c44"/>
<rect x="1340" y="637" width="24" height="20" rx="2" fill="#cce4f7" stroke="#90c8f6"/><path d="M1347 641V653" stroke="#0aa" stroke-width="3"/><path d="M1354 641H1359M1354 645H1359M1354 649H1359M1354 653H1359" stroke="#135" /><path d="M1344 640H1350" stroke="#222"/>
<!-- cp tabs -->
<path d="M1096 670H1108" stroke="#1a6" stroke-width="2"/><path d="M1096 673H1108" stroke="#cc0" stroke-width="2"/><path d="M1096 676H1108" stroke="#e50" stroke-width="2"/><path d="M1096 679H1108" stroke="#25c" stroke-width="2"/><path d="M1096 682H1108" stroke="#111" stroke-width="2"/>
<path d="M1140 669V680M1133 672H1147M1134 672 1131 679H1137ZM1146 672 1143 679H1149ZM1136 682H1144" stroke="#555"/>
<rect x="1171" y="670" width="16" height="13" fill="#d8d8d8" stroke="#999"/><path d="M1173 681 1184 672" stroke="#666"/><use href="#rd" x="1184" y="672"/>

<!-- summary toolbar -->
<rect x="366" y="740" width="14" height="14" fill="#52708f"/><rect x="367" y="741" width="12" height="4" fill="#2a3f70"/><path d="M367 748H379M367 751H379" stroke="#c44"/>
<rect x="535" y="740" width="14" height="14" fill="#52708f"/><rect x="536" y="741" width="12" height="4" fill="#2a3f70"/><path d="M536 748H548M536 751H548" stroke="#c44"/>
<use href="#chc" x="478" y="747"/><use href="#chc" x="731" y="747"/><use href="#chc" x="984" y="747"/>
<use href="#le" x="495" y="748"/><use href="#rig" x="512" y="748"/><use href="#leg" x="749" y="748"/><use href="#ri" x="765" y="748"/><use href="#leg" x="1001" y="748"/><use href="#ri" x="1018" y="748"/>
<rect x="1033.500" y="737.500" width="23" height="22" rx="3" fill="#cce4f7" stroke="#90c8f6"/><use href="#mv" x="1045" y="748"/>
<rect x="1059.500" y="737.500" width="23" height="22" rx="3" fill="#cce4f7" stroke="#90c8f6"/><use href="#mv" transform="translate(1071 748) scale(-1 1)"/>
<rect x="1092.500" y="737.500" width="23" height="22" rx="3" fill="#cce4f7" stroke="#90c8f6"/><use href="#bwT" x="1104" y="748"/>
<use href="#bw" x="1130" y="752"/>
<use href="#tb" x="1163" y="748"/><use href="#tl" x="1189" y="748"/><use href="#tl" x="1215" y="748"/>
<path d="M1241 742H1249M1241 746H1253M1241 750H1257M1241 754H1258" stroke="#d0d0d0" stroke-width="2.500"/>
<rect x="1272.500" y="740.500" width="17" height="16" fill="#fff" stroke="#999"/><path d="M1272 745.500H1289M1272 750.500H1289M1281 740V756" stroke="#aaa"/>
<use href="#xg" x="1314" y="748"/><use href="#flw" x="1342" y="748"/>
<path d="M1361 745 1364 748 1361 751M1365 745 1368 748 1365 751" stroke="#777"/>
<!-- table grid -->
<path d="M419.500 763V933M769.500 763V933M849.500 763V933M929.500 763V933" stroke="#d6d6d6"/>
<path d="M419 837.500H1372M419 853.500H1372M419 869.500H1372M419 885.500H1372M419 901.500H1372M419 917.500H1372M360 933.500H1372M419 821.500H1372" stroke="#e4e0d2"/>
<!-- summary tabs nav -->
<path d="M363.500 970V979M369 970V979L364 974.500Z" fill="#8a8a8a" stroke="#8a8a8a" stroke-width=".8"/>
<use href="#leg" x="385" y="975"/><use href="#rig" x="458" y="975"/>
<path d="M480.500 970V979M475 970V979L480 974.500Z" fill="#8a8a8a" stroke="#8a8a8a" stroke-width=".8"/>

<!-- bottom toolbar -->
<use href="#ax" x="14" y="998"/><rect x="33" y="992" width="9" height="13" fill="#c8f6fa"/><use href="#chc" x="137" y="998"/>
<use href="#cbs" x="164" y="998"/><use href="#cb" x="189" y="998"/><use href="#cb" x="212" y="998"/><use href="#sq" x="238" y="998"/><use href="#cb" x="261" y="998"/>
<use href="#pk" x="291" y="998"/><use href="#st" x="287" y="993"/>
<use href="#n6" x="316" y="998"/><use href="#dr" x="333" y="999"/><use href="#n6" x="351" y="998"/><use href="#p2" x="376" y="998"/><use href="#dc" x="400" y="998"/><use href="#st" x="395" y="993"/>
<use href="#m7" x="431" y="998"/><use href="#dr" x="448" y="999"/><rect x="462" y="1000" width="5" height="7" fill="#5080b0"/><path d="M467 992Q473 992 471 999" stroke="#3a8ad0" stroke-width="1.500"/><use href="#dr" x="484" y="999"/>
<use href="#ml" x="510" y="998"/><use href="#m2" x="533" y="998"/><use href="#m3" x="556" y="998"/><use href="#dr" x="575" y="999"/><use href="#m4" x="594" y="998"/><use href="#m5" x="619" y="998"/><use href="#m6" x="642" y="998"/><use href="#m7" x="666" y="998"/><use href="#m4" x="689" y="998"/>
<path d="M707 995 710 998 707 1001M711 995 714 998 711 1001" stroke="#777"/>
<use href="#dg1" x="749" y="998"/><use href="#dg0" x="778" y="999"/><rect x="779" y="990" width="10" height="7" fill="#2a3f8a"/><use href="#st" x="775" y="994"/>
<use href="#hsq" x="803" y="998"/><use href="#dg1" x="803" y="999"/>
<use href="#dg0" x="833" y="999"/><use href="#st" x="829" y="995"/>
<use href="#hsq" x="857" y="998"/><use href="#dg1" x="857" y="999"/>
<path d="M887 990V1006H902M887 1000H895V1006" stroke="#666"/>
<use href="#hsq" x="926" y="998"/><use href="#dg0" x="925" y="999"/><path d="M926 1001V995A4.500 4.500 0 0 1 935 995V1001" stroke="#777" stroke-width="2.500"/><rect x="924" y="1001" width="4" height="4" fill="#d02020"/><rect x="933" y="1001" width="4" height="4" fill="#2050c0"/>
<use href="#hsq" x="950" y="998"/><path d="M944 1005V997A6 6 0 0 1 956 997V1005" stroke="#666" stroke-width="3"/><rect x="942" y="1002" width="5" height="4" fill="#d02020"/><rect x="953" y="1002" width="5" height="4" fill="#2050c0"/>
<use href="#hsq" x="973" y="998"/><rect x="968.500" y="993.500" width="9" height="9" stroke="#555"/>
<use href="#hsq" x="997" y="998"/><rect x="991.500" y="992.500" width="11" height="11" stroke="#666"/><circle cx="997" cy="998" r="4" stroke="#777"/><path d="M992 993 1002 1003M1002 993 992 1003" stroke="#777"/>
<rect x="1015.500" y="992.500" width="11" height="11" stroke="#666"/><path d="M1016 993 1026 1003M1026 993 1016 1003" stroke="#777"/><circle cx="1021" cy="998" r="2" fill="#777"/>
<path d="M1040 992V1004H1050M1040 997H1046V1004" stroke="#666"/>
<path d="M1063 1004 1075 992" stroke="#999"/><rect x="1067" y="996" width="3" height="3" fill="#777"/>
<path d="M1086 1001 1096 991M1090 1004 1100 994" stroke="#777"/>
<path d="M1111 992H1123" stroke="#777"/><circle cx="1117" cy="999" r="5" stroke="#666"/>
<use href="#hsq" x="1141" y="998"/><circle cx="1141" cy="998" r="6" fill="#c8d4e0" stroke="#666"/><circle cx="1141" cy="998" r="3.500" stroke="#888"/>
<path d="M1159 1003 1171 993M1163 1004 1173 996M1162 996 1170 1002" stroke="#888"/>
<path d="M1183 1003 1195 993M1183 996 1192 1002M1190 992 1195 996" stroke="#777"/>
<path d="M1207 1003 1219 993M1207 995 1219 1003" stroke="#888" stroke-dasharray="2 1"/>
<path d="M1231 1004 1243 992" stroke="#888" stroke-dasharray="1 2"/><path d="M1233 994 1242 1003" stroke="#999" stroke-dasharray="1 2"/>
<use href="#hsq" x="1261" y="998"/><use href="#dh" x="1261" y="998"/>
<rect x="1277.500" y="991.500" width="13" height="13" stroke="#666" stroke-dasharray="2 1"/>
<path d="M1303 995H1312L1314 991H1305ZM1302 1000H1312L1314 996M1302 1004H1312V995" stroke="#666"/>
<use href="#hsq" x="1333" y="998"/><rect x="1326" y="996" width="14" height="4" fill="#666"/><rect x="1325" y="992" width="3" height="1.500" fill="#e01020"/><rect x="1338" y="992" width="3" height="1.500" fill="#e01020"/><rect x="1325" y="1002" width="3" height="1.500" fill="#e01020"/><rect x="1338" y="1002" width="3" height="1.500" fill="#e01020"/>
<use href="#hsq" x="1357" y="998"/><path d="M1357 990V1000" stroke="#555"/><rect x="1353" y="998" width="8" height="6" stroke="#555"/><path d="M1354 994H1360" stroke="#555"/>
<!-- status dividers -->
<path d="M746.500 1012V1028M852.500 1012V1028M1058.500 1012V1028M1123.500 1012V1028M1200.500 1012V1028M1276.500 1012V1028M1352.500 1012V1028" stroke="#cfd0d8"/>
<path d="M1366 1024H1368M1363 1024H1364.500M1366 1021H1368" stroke="#9a9a9a" stroke-width="1.500"/>

<!-- avatar -->
<ellipse cx="1311" cy="951" rx="25.500" ry="25.500" fill="#e6e8f2"/>
<g clip-path="url(#av)" filter="url(#bl)">
<path d="M1294 964Q1289 932 1311 931Q1333 932 1328 964L1324 968H1298Z" fill="#9a7a54"/>
<path d="M1290 980Q1293 967 1305 965H1317Q1329 967 1332 980Z" fill="#3f7098"/>
<path d="M1306 960H1316V968L1311 974 1306 968Z" fill="#e8c2a4"/>
<ellipse cx="1311" cy="950" rx="9.500" ry="12.500" fill="#eec8aa"/>
<path d="M1301 948Q1302 937 1314 936Q1322 939 1321 947Q1315 940 1301 948Z" fill="#b8946a"/>
<rect x="1302.500" y="946.500" width="7.500" height="5" rx="1.500" fill="#c4a896" stroke="#2a3a58"/><rect x="1312" y="946.500" width="7.500" height="5" rx="1.500" fill="#c4a896" stroke="#2a3a58"/>
<path d="M1306 957Q1311 960 1316 957" stroke="#b85a52" stroke-width="1.200"/>
</g>
</svg>

<!-- title/menu text -->
<div class="t" style="left:30px;top:8px">Dlubal RFEM | 6.06.0004 | Example-01-EN-CEN.rf6*</div>
<div class="t n" style="left:25px;top:34px">File</div><div class="t n" style="left:59px;top:34px">Edit</div><div class="t n" style="left:95px;top:34px">View</div><div class="t n" style="left:136px;top:34px">Insert</div><div class="t n" style="left:181px;top:34px">Assign</div><div class="t" style="left:231px;top:34px">Calculate</div><div class="t" style="left:294px;top:34px">Results</div><div class="t" style="left:346px;top:34px">Tools</div><div class="t n" style="left:390px;top:34px">Options</div><div class="t n" style="left:448px;top:34px">Window</div><div class="t" style="left:508px;top:34px;letter-spacing:-.5px">CAD-BIM</div><div class="t n" style="left:569px;top:34px">Help</div>
<div class="t" style="left:737px;top:34px;color:#777;letter-spacing:-.3px">Type a keyword (Alt+Q)</div>
<div class="t" style="left:995px;top:34px;letter-spacing:-.28px">Online License 39 | Stefan Hoffmann | Dlubal Software GmbH</div>
<!-- toolbar text -->
<div class="t" style="left:677px;top:58px;color:#fff">ULS</div><div class="t" style="left:707px;top:58px">DS1</div>
<div class="t" style="left:771px;top:58px;letter-spacing:-.6px">ULS (STR/GEO) - Permanent...</div>
<div class="t" style="left:456px;top:63px;font:bold 8px/10px 'Liberation Mono',monospace;color:#fff">&gt;SC</div>
<div class="t" style="left:1040px;top:57px;font:bold 7px/8px 'Liberation Mono',monospace;color:#555">x.xx</div>
<div class="t" style="left:1092px;top:57px;font:bold 7px/8px 'Liberation Mono',monospace;color:#888">x.xx</div>
<div class="t" style="left:1206px;top:57px;font:bold 7px/8px 'Liberation Mono',monospace;color:#333">x.xx</div>
<div class="t" style="left:1122px;top:743px;font:bold 7px/8px 'Liberation Mono',monospace;color:#333">x.xx</div>
<div class="t" style="left:48px;top:543px;font:bold 7px/8px 'Liberation Mono',monospace;color:#333">x x</div>
<div class="t" style="left:44px;top:697px;font:bold 7px/8px 'Liberation Mono',monospace;color:#333">x.xx</div>
<div class="t" style="left:462px;top:990px;font:bold 8px/8px 'Liberation Sans',sans-serif;color:#222">2</div>
<!-- panel headers -->
<div class="t d" style="left:7px;top:111px">Navigator - Results</div>
<div class="t d" style="left:1089px;top:111px">Control Panel</div>
<div class="t d" style="left:365px;top:697px">Summary</div>
<div class="t g" style="left:30px;top:137px;letter-spacing:-.35px">Static Analysis</div>
<!-- tree text -->
<div class="t" style="left:64px;top:167px;letter-spacing:-.1px">Global Deformations</div>
<div class="t" style="left:84px;top:185px">|u|</div>
<div class="t n" style="left:84px;top:203px">u<span class="s">X</span></div>
<div class="t n" style="left:84px;top:221px">u<span class="s">Y</span></div>
<div class="t n" style="left:84px;top:239px">u<span class="s">Z</span></div>
<div class="t n" style="left:84px;top:257px">φ<span class="s">X</span></div>
<div class="t n" style="left:84px;top:275px">φ<span class="s">Y</span></div>
<div class="t n" style="left:84px;top:293px">φ<span class="s">Z</span></div>
<div class="t" style="left:64px;top:311px;letter-spacing:-.5px">Surfaces</div>
<div class="t" style="left:84px;top:329px;letter-spacing:-.5px">Layer Side</div>
<div class="t" style="left:84px;top:347px">Local Deformations</div>
<div class="t" style="left:84px;top:365px">Internal Forces</div>
<div class="t" style="left:84px;top:383px;letter-spacing:-.5px">Stresses</div>
<div class="t" style="left:84px;top:401px">Strains</div>
<div class="t" style="left:84px;top:419px;letter-spacing:-.44px">Contact Stresses</div>
<div class="t" style="left:84px;top:437px">Shape</div>
<div class="t" style="left:64px;top:455px">Support Reactions</div>
<div class="t" style="left:64px;top:473px;letter-spacing:-.4px">Envelope Values</div>
<div class="t" style="left:84px;top:491px">Max Values</div>
<div class="t" style="left:84px;top:509px">Min Values</div>
<div class="t" style="left:84px;top:527px;letter-spacing:-.28px">Max and Min Values</div>
<div class="t" style="left:64px;top:545px;letter-spacing:-.4px">Values on Surfaces</div>
<!-- lower tree text -->
<div class="t" style="left:64px;top:699px;letter-spacing:-.4px">Result Values</div>
<div class="t n" style="left:64px;top:717px">Title Information</div>
<div class="t n" style="left:64px;top:735px">Max/Min Information</div>
<div class="t n" style="left:64px;top:753px">Deformation</div>
<div class="t" style="left:64px;top:771px">Lines</div>
<div class="t" style="left:64px;top:789px">Members</div>
<div class="t" style="left:64px;top:807px;letter-spacing:-.5px">Surfaces</div>
<div class="t" style="left:64px;top:825px">Solids</div>
<div class="t" style="left:64px;top:843px">Line Welds</div>
<div class="t" style="left:64px;top:861px;letter-spacing:-.4px">Values on Surfaces</div>
<div class="t" style="left:64px;top:879px">Type of display</div>
<div class="t" style="left:64px;top:897px;letter-spacing:-.17px">Ribs - Effective Contribution on Surface/Member</div>
<div class="t" style="left:64px;top:915px">Support Reactions</div>
<div class="t" style="left:64px;top:933px;letter-spacing:-.33px">Result Sections</div>
<!-- viewport text -->
<div class="t" style="left:364px;top:113px;letter-spacing:-.34px">DS1 - ULS (STR/GEO) - Permanent and transient - Eq. 6.10</div>
<div class="t" style="left:364px;top:130px;letter-spacing:-.15px">Static Analysis</div>
<div class="t w" style="left:364px;top:147px">Displacements u<span class="s">X</span> [mm]</div>
<div class="t n" style="left:364px;top:670px">max u<span class="s">X</span> : 7.1 | min u<span class="s">X</span> : 0.0 mm</div>
<div class="t" style="left:654px;top:538px;color:#10c020;font-size:11px">Y</div>
<div class="t" style="left:721px;top:533px;color:#e01020;font-size:13px">X</div>
<div class="t" style="left:389px;top:616px;color:#10a020;font-size:11px">Y</div>
<div class="t" style="left:458px;top:612px;color:#e01020;font-size:11px">X</div>
<div class="t" style="left:414px;top:654px;color:#1a2a6a;font-size:11px">Z</div>
<div class="t" style="left:986px;top:174px;color:#3cb04c;font:bold 14px/14px 'Liberation Sans',sans-serif">-Y</div>
<div class="t" style="left:1035px;top:174px;color:#d05050;font:bold 13px/14px 'Liberation Sans',sans-serif">-X</div>
<!-- control panel text -->
<div class="t" style="left:1094px;top:134px;letter-spacing:-.1px">Global Deformations</div>
<div class="t n" style="left:1094px;top:147px">u<span class="s">X</span> [mm]</div>
<div class="t r n" style="left:1140px;top:182px;width:40px">7.1</div><div class="t r n" style="left:1140px;top:208px;width:40px">6.5</div><div class="t r n" style="left:1140px;top:234px;width:40px">5.8</div><div class="t r n" style="left:1140px;top:260px;width:40px">5.2</div><div class="t r n" style="left:1140px;top:286px;width:40px">4.5</div><div class="t r n" style="left:1140px;top:312px;width:40px">3.9</div><div class="t r n" style="left:1140px;top:338px;width:40px">3.2</div><div class="t r n" style="left:1140px;top:364px;width:40px">2.6</div><div class="t r n" style="left:1140px;top:390px;width:40px">1.9</div><div class="t r n" style="left:1140px;top:416px;width:40px">1.3</div><div class="t r n" style="left:1140px;top:442px;width:40px">0.6</div><div class="t r n" style="left:1140px;top:468px;width:40px">0.0</div>
<div class="t r p" style="left:1225px;top:195px;width:60px">4.60 %</div><div class="t r p" style="left:1225px;top:221px;width:60px">2.48 %</div><div class="t r p" style="left:1225px;top:247px;width:60px">2.52 %</div><div class="t r p" style="left:1225px;top:273px;width:60px">2.57 %</div><div class="t r p" style="left:1225px;top:299px;width:60px">2.65 %</div><div class="t r p" style="left:1225px;top:325px;width:60px">2.75 %</div><div class="t r p" style="left:1225px;top:351px;width:60px">2.90 %</div><div class="t r p" style="left:1225px;top:377px;width:60px">3.11 %</div><div class="t r p" style="left:1225px;top:403px;width:60px">3.42 %</div><div class="t r p" style="left:1225px;top:429px;width:60px">3.91 %</div><div class="t r p" style="left:1225px;top:455px;width:60px">69.09 %</div>
<!-- summary text -->
<div class="t n" style="left:367px;top:718px">Go To</div><div class="t n" style="left:413px;top:718px">Edit</div><div class="t n" style="left:449px;top:718px">Selection</div><div class="t n" style="left:512px;top:718px">View</div><div class="t n" style="left:553px;top:718px">Settings</div>
<div class="t" style="left:385px;top:741px;letter-spacing:-.4px">Static Analysis</div><div class="t n" style="left:554px;top:741px">Overview</div>
<div class="t" style="left:791px;top:741px;color:#fff">ULS</div><div class="t" style="left:821px;top:741px">DS1</div><div class="t" style="left:885px;top:741px;letter-spacing:-.8px">ULS (STR/GEO) -...</div>
<div class="t c n" style="left:419px;top:789px;width:350px">Description</div><div class="t c n" style="left:769px;top:789px;width:80px">Value</div><div class="t c n" style="left:849px;top:789px;width:80px">Unit</div><div class="t c n" style="left:929px;top:789px;width:443px">Notes</div>
<div class="t" style="left:364px;top:806px">Maximum deformations</div>
<div class="t" style="left:424px;top:822px">Maximum displacement in X-direction</div><div class="t r n" style="left:784px;top:822px;width:60px">7.1</div><div class="t n" style="left:854px;top:822px">mm</div><div class="t w" style="left:934px;top:822px">FE node No. 20: (160, 350, -1000 mm) | CO1</div>
<div class="t" style="left:424px;top:838px">Maximum displacement in Y-direction</div><div class="t r n" style="left:784px;top:838px;width:60px">0.0</div><div class="t n" style="left:854px;top:838px">mm</div><div class="t w" style="left:934px;top:838px">FE node No. 7731: (340, 350, -10 mm) | CO1</div>
<div class="t" style="left:424px;top:854px">Maximum displacement in Z-direction</div><div class="t r n" style="left:784px;top:854px;width:60px">0.9</div><div class="t n" style="left:854px;top:854px">mm</div><div class="t w" style="left:934px;top:854px">FE node No. 22: (340, 250, -1000 mm) | CO1</div>
<div class="t" style="left:424px;top:870px">Maximum vectorial displacement</div><div class="t r n" style="left:784px;top:870px;width:60px">7.2</div><div class="t n" style="left:854px;top:870px">mm</div><div class="t w" style="left:934px;top:870px">FE node No. 8716: (340, 300, -1000 mm) | CO1</div>
<div class="t" style="left:424px;top:886px">Maximum rotation about X-axis</div><div class="t r n" style="left:784px;top:886px;width:60px">-4.5</div><div class="t n" style="left:854px;top:886px">mrad</div><div class="t w" style="left:934px;top:886px">FE node No. 2823: (160, 150, -10 mm) | CO3</div>
<div class="t" style="left:424px;top:902px">Maximum rotation about Y-axis</div><div class="t r n" style="left:784px;top:902px;width:60px">-8.9</div><div class="t n" style="left:854px;top:902px">mrad</div><div class="t w" style="left:934px;top:902px">FE node No. 4821: (160, 350, -900 mm) | CO3</div>
<div class="t" style="left:424px;top:918px">Maximum rotation about Z-axis</div><div class="t r n" style="left:784px;top:918px;width:60px">-1.4</div><div class="t n" style="left:854px;top:918px">mrad</div><div class="t w" style="left:934px;top:918px">FE node No. 6733: (340, 150, -20 mm) | CO3</div>
<div class="t n" style="left:407px;top:968px">1 of 1</div><div class="t" style="left:493px;top:968px">Summary</div>
<div class="t v" style="left:48px;top:991px">1 - Global XYZ</div>
<div class="t v" style="left:857px;top:1013px">CS: Global XYZ</div><div class="t v" style="left:1063px;top:1013px">Plane: XY</div>
</body></html>
